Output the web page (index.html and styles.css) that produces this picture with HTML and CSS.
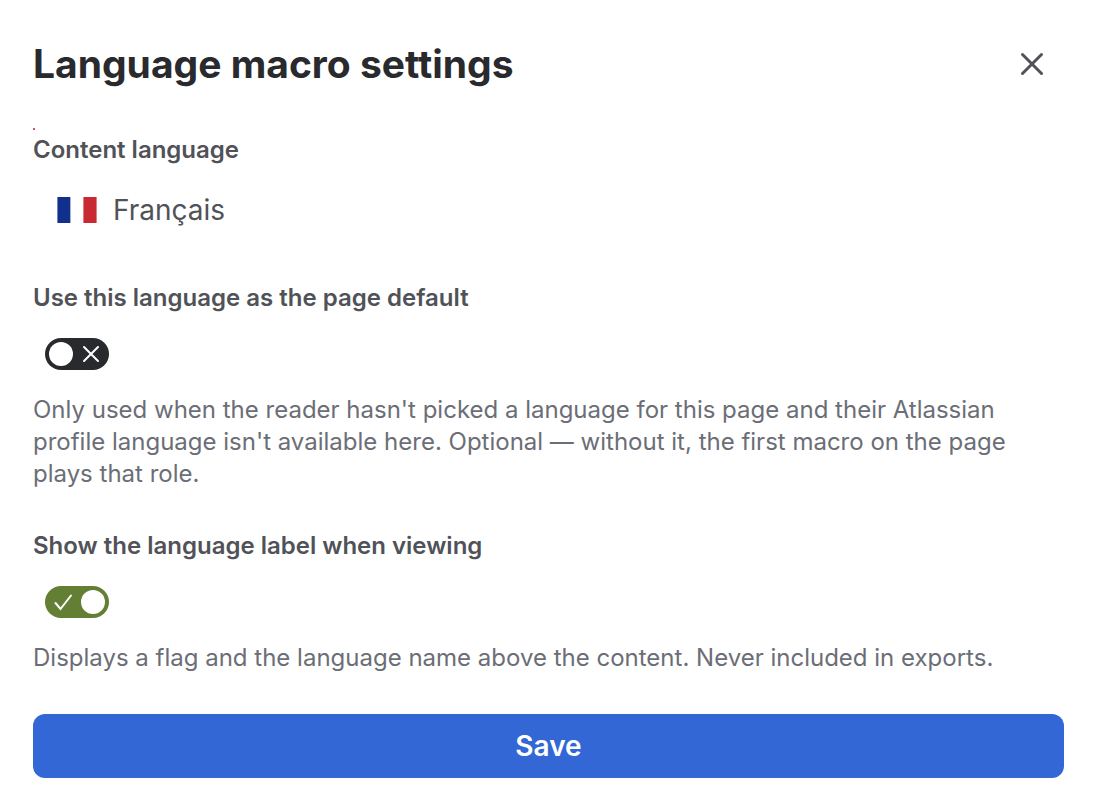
FILE: index.html
```html
<!DOCTYPE html>
<html lang="en">
<head>
<meta charset="utf-8">
<meta name="viewport" content="width=device-width, initial-scale=1">
<title>Language macro settings</title>
<link rel="stylesheet" href="styles.css">
</head>
<body>
<form class="panel">
  <header class="panel-header">
    <h1 class="title">Language macro settings</h1>
    <button class="close" type="button" aria-label="Close">
      <svg class="close-icon" viewBox="0 0 24 24" aria-hidden="true"><path d="M2.5 2.5 21.5 21.5M21.5 2.5 2.5 21.5"/></svg>
    </button>
  </header>

  <div class="required-mark"></div>

  <section class="field">
    <h2 class="label">Content language</h2>
    <button class="language" type="button">
      <svg class="flag" viewBox="0 0 40 26" aria-hidden="true"><path fill="#10308c" d="M.4 0h13.2v26H.4z"/><path fill="#fff" d="M13.6 0h12.8v26H13.6z"/><path fill="#c92a32" d="M26.4 0h13.2v26H26.4z"/></svg>
      Français
    </button>
  </section>

  <section class="field">
    <label class="label" for="page-default">Use this language as the page default</label>
    <span class="toggle">
      <input class="toggle-input" type="checkbox" id="page-default" aria-describedby="default-help">
      <svg class="toggle-icon cross" viewBox="0 0 20 20" aria-hidden="true"><path d="M3 3 17 17M17 3 3 17"/></svg>
    </span>
    <p class="help" id="default-help">Only used when the reader hasn't picked a language for this page and their Atlassian profile language isn't available here. Optional — without it, the first macro on the page plays that role.</p>
  </section>

  <section class="field">
    <label class="label" for="show-label">Show the language label when viewing</label>
    <span class="toggle">
      <input class="toggle-input" type="checkbox" id="show-label" aria-describedby="label-help" checked>
      <svg class="toggle-icon check" viewBox="0 0 20 20" aria-hidden="true"><path d="M2.5 11 7.5 17 18 3.5"/></svg>
    </span>
    <p class="help" id="label-help">Displays a flag and the language name above the content. Never included in exports.</p>
  </section>

  <button class="save" type="submit">Save</button>
</form>
</body>
</html>
```
FILE: styles.css
```css
* {
  box-sizing: border-box;
}

body {
  margin: 0;
  background: #fff;
  color: #292a2e;
  font-family: Inter, "Liberation Sans", sans-serif;
}

button {
  font-family: inherit;
  border: 0;
  padding: 0;
  background: none;
  cursor: pointer;
}

.panel {
  padding: 32px 32px 32px 33px;
}

.panel-header {
  display: flex;
  align-items: center;
  justify-content: space-between;
  margin-bottom: 32px;
}

.title {
  margin: 0;
  font-size: 39px;
  line-height: 64px;
  font-weight: 653;
}

.close {
  display: grid;
  place-items: center;
  width: 64px;
  height: 64px;
}

.close-icon {
  width: 24px;
  height: 24px;
  fill: none;
  stroke: #505258;
  stroke-width: 3;
  stroke-linecap: round;
}

.required-mark {
  width: 2px;
  height: 2px;
  margin-bottom: 4px;
  background: #d0506a;
}

.field {
  display: flex;
  flex-direction: column;
  align-items: flex-start;
  margin-bottom: 40px;
}

.label {
  margin: 0;
  font-size: 24px;
  line-height: 32px;
  font-weight: 625;
  color: #505258;
}

.language {
  display: flex;
  align-items: center;
  gap: 16px;
  height: 64px;
  margin-top: 12px;
  padding: 0 24px;
  font-size: 28px;
  line-height: 40px;
  color: #505258;
}

.flag {
  width: 40px;
  height: 26px;
}

.toggle {
  position: relative;
  display: flex;
  margin: 24px 12px;
}

.toggle-input {
  appearance: none;
  display: flex;
  align-items: center;
  width: 64px;
  height: 32px;
  margin: 0;
  padding: 0 4px;
  border-radius: 16px;
  background: #292a2e;
}

.toggle-input::before {
  content: "";
  width: 24px;
  height: 24px;
  border-radius: 50%;
  background: #fff;
}

.toggle-input:checked {
  justify-content: flex-end;
  background: #637f33;
}

.toggle-icon {
  position: absolute;
  top: 6px;
  width: 20px;
  height: 20px;
  fill: none;
  stroke: #fff;
  stroke-width: 2;
  stroke-linecap: round;
  pointer-events: none;
}

.cross {
  right: 8px;
}

.check {
  left: 8px;
}

.help {
  margin: 0;
  font-size: 24px;
  line-height: 32px;
  color: #6b6e76;
}

.save {
  width: 100%;
  height: 64px;
  border-radius: 12px;
  background: #3267d5;
  color: #fff;
  font-size: 28px;
  font-weight: 600;
}
```
